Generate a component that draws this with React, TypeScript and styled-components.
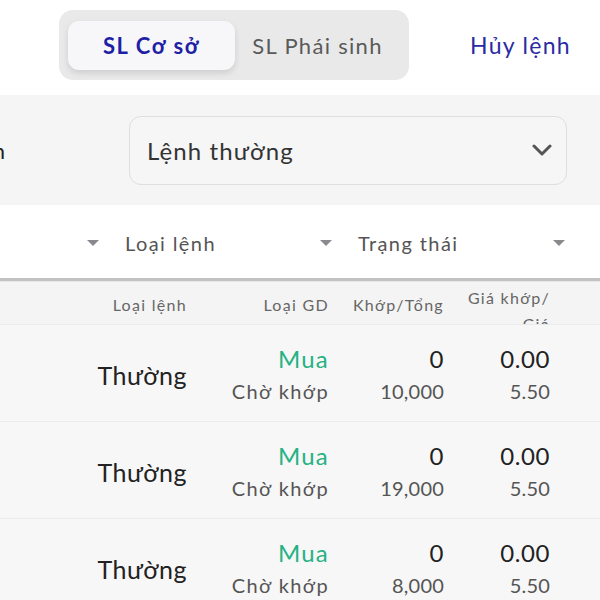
import React from "react";
import styled, { createGlobalStyle } from "styled-components";

const Global = createGlobalStyle`
  html, body { margin: 0; padding: 0; background: #fff; }
  body { width: 600px; height: 600px; overflow: hidden; font-family: "Lato", "Open Sans", sans-serif; }
  * { box-sizing: border-box; }
`;

const Page = styled.div`
  width: 600px;
  height: 600px;
  overflow: hidden;
  display: flex;
  flex-direction: column;
`;

const TopBar = styled.div`
  height: 95px;
  flex: none;
  display: flex;
  align-items: flex-start;
  padding: 10px 29px 0 59px;
  background: #fff;
`;

const Segmented = styled.div`
  width: 350px;
  height: 70px;
  border-radius: 14px;
  background: #e9e9e9;
  display: flex;
  align-items: center;
  padding: 0 9px;
`;

const Tab = styled.div<{ $active?: boolean }>`
  height: 49px;
  width: ${(p) => (p.$active ? "167px" : "auto")};
  flex: ${(p) => (p.$active ? "none" : "1")};
  display: flex;
  align-items: center;
  justify-content: center;
  border-radius: 11px;
  font-size: 22px;
  font-weight: ${(p) => (p.$active ? 700 : 400)};
  color: ${(p) => (p.$active ? "#1f1fa6" : "#5a5a5a")};
  background: ${(p) => (p.$active ? "#f7f7fa" : "transparent")};
  box-shadow: ${(p) => (p.$active ? "0 3px 6px rgba(0,0,0,0.12)" : "none")};
  letter-spacing: ${(p) => (p.$active ? "1.6px" : "1.3px")};
`;

const CancelLink = styled.div`
  margin-left: auto;
  height: 70px;
  display: flex;
  align-items: center;
  font-size: 23px;
  color: #2a2aa3;
  letter-spacing: 1.3px;
`;

const FormRow = styled.div`
  height: 110px;
  flex: none;
  background: #f5f5f5;
  display: flex;
  align-items: center;
`;

const ClippedLabel = styled.div`
  width: 5px;
  overflow: hidden;
  display: flex;
  justify-content: flex-end;
  white-space: nowrap;
  font-size: 22px;
  color: #222;
`;

const Select = styled.div`
  margin-left: 124px;
  width: 438px;
  height: 69px;
  border: 1.5px solid #dedede;
  border-radius: 12px;
  background: #f6f6f6;
  display: flex;
  align-items: center;
  justify-content: space-between;
  padding: 0 14px 0 17px;
  font-size: 24px;
  color: #333;
  letter-spacing: 1.1px;
`;

const FilterRow = styled.div`
  height: 73px;
  flex: none;
  background: #fff;
  display: grid;
  grid-template-columns: 125px 233px 233px;
  align-items: center;
  padding-top: 3px;
`;

const FilterCell = styled.div`
  display: flex;
  align-items: center;
  justify-content: space-between;
  padding-right: 26px;
  font-size: 20px;
  color: #555;
  letter-spacing: 1.4px;
  white-space: nowrap;
`;

const Caret = styled.span`
  width: 0;
  height: 0;
  border-left: 6px solid transparent;
  border-right: 6px solid transparent;
  border-top: 6px solid #8a8a8e;
  margin-left: auto;
`;

const Divider = styled.div`
  height: 4px;
  flex: none;
  background: #c2c2c2;
  border-bottom: 1px solid #e6e6e6;
`;

const Grid = styled.div`
  display: grid;
  grid-template-columns: 187px 142px 115px 106px 1fr;
`;

const HeaderRow = styled(Grid)`
  height: 43px;
  flex: none;
  overflow: hidden;
  background: #f4f4f4;
  border-bottom: 1px solid #ebebeb;
  align-items: start;
  padding-top: 3px;
`;

const HeadCell = styled.div<{ $multi?: boolean }>`
  text-align: right;
  font-size: 16px;
  line-height: 26px;
  color: #666;
  padding-top: ${(p) => (p.$multi ? "0" : "7px")};
  letter-spacing: 1.3px;
  white-space: nowrap;
`;

const Row = styled(Grid)`
  height: 97px;
  flex: none;
  background: #f7f7f7;
  border-bottom: 1px solid #ebebeb;
  align-items: center;
  padding-top: 4px;
`;

const TypeCell = styled.div`
  text-align: right;
  font-size: 25px;
  color: #222;
  letter-spacing: 0.5px;
`;

const Stack = styled.div`
  display: flex;
  flex-direction: column;
  align-items: flex-end;
`;

const Main = styled.div<{ $green?: boolean }>`
  font-size: 24px;
  line-height: 33px;
  color: ${(p) => (p.$green ? "#26b283" : "#222")};
  letter-spacing: ${(p) => (p.$green ? "1.2px" : "0.6px")};
`;

const Sub = styled.div<{ $num?: boolean }>`
  font-size: 20px;
  line-height: 33px;
  color: #555;
  letter-spacing: ${(p) => (p.$num ? "0.2px" : "1.4px")};
`;

const rows = [
  { total: "10,000" },
  { total: "19,000" },
  { total: "8,000" },
];

export default function App() {
  return (
    <>
      <Global />
      <Page>
        <TopBar>
          <Segmented>
            <Tab $active>SL Cơ sở</Tab>
            <Tab>SL Phái sinh</Tab>
          </Segmented>
          <CancelLink>Hủy lệnh</CancelLink>
        </TopBar>
        <FormRow>
          <ClippedLabel>
            <span>Loại lệnh</span>
          </ClippedLabel>
          <Select>
            <span>Lệnh thường</span>
            <svg width="20" height="14" viewBox="0 0 20 14">
              <polyline
                points="2,3 10,11 18,3"
                fill="none"
                stroke="#555"
                strokeWidth="3"
                strokeLinecap="round"
                strokeLinejoin="round"
              />
            </svg>
          </Select>
        </FormRow>
        <FilterRow>
          <FilterCell>
            <Caret />
          </FilterCell>
          <FilterCell>
            <span>Loại lệnh</span>
            <Caret />
          </FilterCell>
          <FilterCell>
            <span>Trạng thái</span>
            <Caret />
          </FilterCell>
        </FilterRow>
        <Divider />
        <HeaderRow>
          <HeadCell>Loại lệnh</HeadCell>
          <HeadCell>Loại GD</HeadCell>
          <HeadCell>Khớp/Tổng</HeadCell>
          <HeadCell $multi>
            Giá khớp/
            <br />
            Giá
          </HeadCell>
        </HeaderRow>
        {rows.map((r, i) => (
          <Row key={i}>
            <TypeCell>Thường</TypeCell>
            <Stack>
              <Main $green>Mua</Main>
              <Sub>Chờ khớp</Sub>
            </Stack>
            <Stack>
              <Main>0</Main>
              <Sub $num>{r.total}</Sub>
            </Stack>
            <Stack>
              <Main>0.00</Main>
              <Sub $num>5.50</Sub>
            </Stack>
          </Row>
        ))}
      </Page>
    </>
  );
}
